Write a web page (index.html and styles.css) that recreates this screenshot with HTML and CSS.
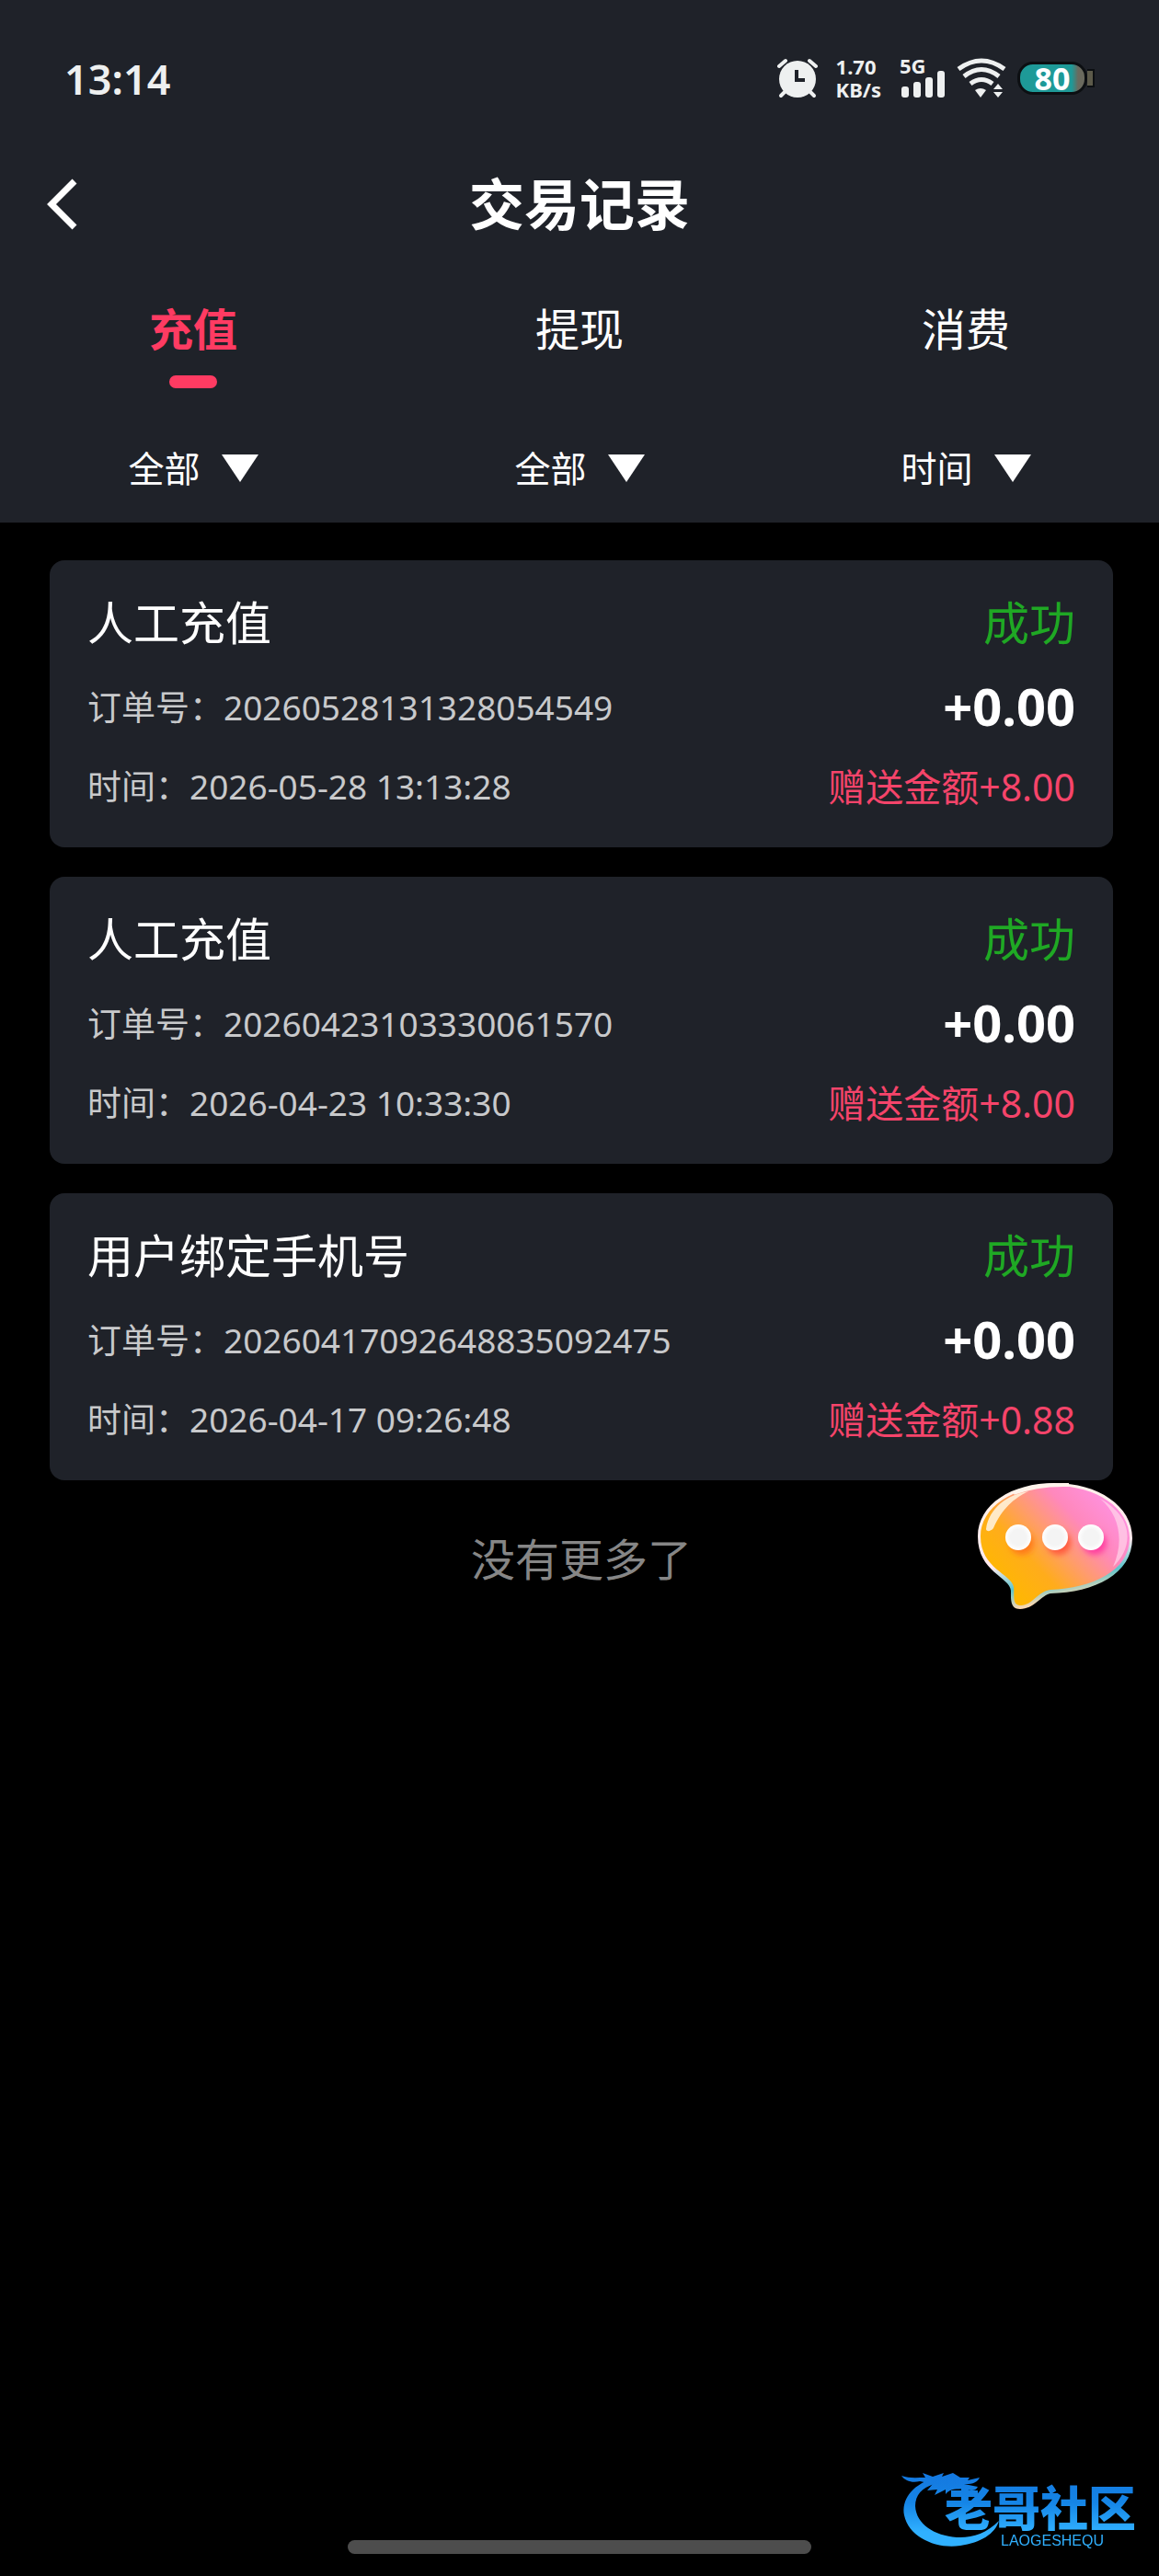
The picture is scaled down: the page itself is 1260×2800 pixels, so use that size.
FILE: index.html
```html
<!DOCTYPE html>
<html lang="zh-CN">
<head>
  <meta charset="UTF-8">
  <meta name="viewport" content="width=device-width, initial-scale=1.0">
  <title>交易记录</title>
  <link rel="stylesheet" href="styles.css">
</head>
<body>
  <header class="header">
    <div class="status-bar">
      <span class="clock">13:14</span>
      <div class="status-icons">
        <svg class="icon-alarm" width="44" height="44" viewBox="0 0 44 44">
          <g stroke="#eef0f0" stroke-linecap="round" fill="none">
            <path d="M2 9 L9 3 M42 9 L35 3" stroke-width="4"/>
            <path d="M9 36 L4 41 M35 36 L40 41" stroke-width="4"/>
          </g>
          <circle cx="22" cy="23" r="20" fill="#eef0f0"/>
          <path d="M21 13 V24 H30" fill="none" stroke="#1f2229" stroke-width="4"/>
        </svg>
        <div class="net-speed">
          <span>1.70</span>
          <span>KB/s</span>
        </div>
        <div class="signal">
          <span class="signal-label">5G</span>
          <svg width="50" height="44" viewBox="0 0 50 44" fill="#eef0f0">
            <rect x="2" y="31" width="8" height="12" rx="3"/>
            <rect x="15" y="26" width="8" height="17" rx="3"/>
            <rect x="28" y="21" width="8" height="22" rx="3"/>
            <rect x="41" y="14" width="8" height="29" rx="3"/>
          </svg>
        </div>
        <svg class="icon-wifi" width="54" height="44" viewBox="0 0 54 44">
          <g fill="none" stroke="#eef0f0" stroke-width="5">
            <path d="M2 12 Q27 -6 52 12"/>
            <path d="M8 20 Q27 5 46 20"/>
            <path d="M15 28 Q27 19 39 28"/>
          </g>
          <path d="M20 35 Q26 31 32 35 L26 43 Z" fill="#eef0f0"/>
          <path d="M40 34 L45 28 L50 34 Z M40 37 L45 43 L50 37 Z" fill="#eef0f0"/>
        </svg>
        <div class="battery">
          <span class="battery-level">80</span>
          <span class="battery-tip"></span>
        </div>
      </div>
    </div>

    <div class="navbar">
      <button class="back-btn" aria-label="返回">
        <svg width="34" height="56" viewBox="0 0 34 56">
          <path d="M31 3 L6 28 L31 53" fill="none" stroke="#fff" stroke-width="7"/>
        </svg>
      </button>
      <h1>交易记录</h1>
    </div>

    <nav class="tabs">
      <button class="active">充值</button>
      <button>提现</button>
      <button>消费</button>
    </nav>

    <div class="filters">
      <label class="filter">
        <select aria-label="类型">
          <option>全部</option>
          <option>人工</option>
        </select>
        <svg width="40" height="30" viewBox="0 0 40 30"><path d="M0 0 H40 L20 30 Z" fill="#fff"/></svg>
      </label>
      <label class="filter">
        <select aria-label="状态">
          <option>全部</option>
          <option>成功</option>
        </select>
        <svg width="40" height="30" viewBox="0 0 40 30"><path d="M0 0 H40 L20 30 Z" fill="#fff"/></svg>
      </label>
      <label class="filter">
        <select aria-label="时间">
          <option>时间</option>
          <option>今天</option>
        </select>
        <svg width="40" height="30" viewBox="0 0 40 30"><path d="M0 0 H40 L20 30 Z" fill="#fff"/></svg>
      </label>
    </div>
  </header>

  <main class="records">
    <article class="record">
      <h2>人工充值</h2>
      <span class="state">成功</span>
      <p>订单号：20260528131328054549</p>
      <strong class="amount">+0.00</strong>
      <p>时间：2026-05-28 13:13:28</p>
      <span class="bonus">赠送金额+8.00</span>
    </article>

    <article class="record">
      <h2>人工充值</h2>
      <span class="state">成功</span>
      <p>订单号：20260423103330061570</p>
      <strong class="amount">+0.00</strong>
      <p>时间：2026-04-23 10:33:30</p>
      <span class="bonus">赠送金额+8.00</span>
    </article>

    <article class="record">
      <h2>用户绑定手机号</h2>
      <span class="state">成功</span>
      <p>订单号：20260417092648835092475</p>
      <strong class="amount">+0.00</strong>
      <p>时间：2026-04-17 09:26:48</p>
      <span class="bonus">赠送金额+0.88</span>
    </article>

    <p class="no-more">没有更多了</p>
  </main>

  <button class="chat-btn" aria-label="在线客服">
    <svg width="170" height="140" viewBox="0 0 170 140">
      <defs>
        <linearGradient id="bubble" x1="0.1" y1="0.8" x2="0.9" y2="0.2">
          <stop offset="0" stop-color="#ffb800"/>
          <stop offset="0.3" stop-color="#ffac1c"/>
          <stop offset="0.52" stop-color="#ff9c6c"/>
          <stop offset="0.75" stop-color="#ff88bc"/>
          <stop offset="1" stop-color="#ff90dc"/>
        </linearGradient>
        <linearGradient id="rim" x1="0" y1="0" x2="0.25" y2="1">
          <stop offset="0" stop-color="#fff4ea"/>
          <stop offset="0.65" stop-color="#ffe9ee"/>
          <stop offset="0.85" stop-color="#5cc4cc"/>
          <stop offset="1" stop-color="#ffd9b0"/>
        </linearGradient>
        <radialGradient id="dot">
          <stop offset="0.6" stop-color="#f4f4f4"/>
          <stop offset="1" stop-color="#ffffff"/>
        </radialGradient>
        <filter id="soft" x="-20%" y="-20%" width="140%" height="140%">
          <feGaussianBlur stdDeviation="3"/>
        </filter>
      </defs>
      <path d="M84 1 C132 1 169 26 169 61 C169 100 128 120 80 121 C70 123 62 138 47 138 C36 138 37 127 37 118 C36 103 1 98 1 59 C1 24 38 1 84 1 Z" fill="url(#rim)"/>
      <path d="M84 4 C130 4 166 28 166 61 C166 97 125 115 80 117 C66 119 60 134 48 134 C38 134 41 124 40 114 C38 100 4 94 4 59 C4 27 40 4 84 4 Z" fill="url(#bubble)"/>
      <path d="M134 18 C156 36 160 66 148 92 C168 74 174 40 134 18 Z" fill="#ffd6ea" opacity="0.7"/>
      <path d="M10 51 C13 28 34 13 56 10 C40 18 28 28 18 50 C15 54 10 54 10 51 Z" fill="#fff1d8" opacity="0.9"/>
      <path d="M40 12 Q66 2 100 3" fill="none" stroke="#fff3ea" stroke-width="4"/>
      <g filter="url(#soft)">
        <circle cx="49" cy="66" r="13" fill="#ff7a1c"/>
        <circle cx="89" cy="66" r="13" fill="#ff5a3c"/>
        <circle cx="128" cy="66" r="13" fill="#ff3fa0"/>
      </g>
      <circle cx="45" cy="60" r="14" fill="url(#dot)"/>
      <circle cx="85" cy="60" r="14" fill="url(#dot)"/>
      <circle cx="124" cy="60" r="14" fill="url(#dot)"/>
    </svg>
  </button>

  <div class="brand">
    <svg width="264" height="94" viewBox="0 0 264 94">
      <defs>
        <linearGradient id="blue" gradientUnits="userSpaceOnUse" x1="0" y1="0" x2="0" y2="90">
          <stop offset="0.1" stop-color="#1478e0"/>
          <stop offset="0.45" stop-color="#1585e6"/>
          <stop offset="0.8" stop-color="#30b0ff"/>
        </linearGradient>
      </defs>
      <g fill="url(#blue)">
        <path d="M34 14 C10 22 0 38 3 54 C8 78 38 91 64 87 C86 84 102 74 106 60 C92 74 76 79 60 78 C36 76 16 64 15 44 C15 32 22 24 36 20 Z"/>
        <path d="M0 11 C8 14 16 13 26 13 L23 8 L34 12 L46 8 L44 12 L56 8 L64 13 L74 13 L72 16 L85 13 C82 20 74 20 68 20 L83 23 C80 29 73 27 68 25 C60 26 54 24 48 31 L48 26 L36 32 L39 26 L28 27 L34 20 L20 17 C12 19 4 17 0 11 Z"/>
        <text class="brand-name" x="47" y="66">老哥社区</text>
        <text class="brand-sub" x="108" y="87">LAOGESHEQU</text>
      </g>
    </svg>
  </div>
  <div class="home-bar"></div>
</body>
</html>
```

FILE: styles.css
```css
* {
  box-sizing: border-box;
}
body {
  margin: 0;
  min-height: 100vh;
  background: #000;
  color: #fff;
  font-family: "Noto Sans", "Noto Sans CJK SC", sans-serif;
}
h1, h2, p {
  margin: 0;
}
svg {
  display: block;
}
button, select {
  margin: 0;
  padding: 0;
  border: none;
  background: none;
  color: inherit;
  font-family: inherit;
  cursor: pointer;
}

/* top area */
.header {
  background: #1f2229;
  padding-bottom: 31px;
}
.status-bar {
  display: flex;
  align-items: center;
  justify-content: space-between;
  height: 170px;
  padding: 0 70px;
  color: #eef0f0;
}
.clock {
  font-size: 45px;
  font-weight: 600;
}
.status-icons {
  display: flex;
  align-items: center;
}
.net-speed {
  display: flex;
  flex-direction: column;
  margin: 0 20px;
  font-size: 22px;
  line-height: 25px;
  font-weight: 700;
}
.signal {
  position: relative;
  margin-right: 12px;
}
.signal-label {
  position: absolute;
  top: -4px;
  left: 0;
  font-size: 22px;
  line-height: 25px;
  font-weight: 700;
}
.icon-wifi {
  margin-right: 12px;
}
.battery {
  display: flex;
  align-items: center;
}
.battery-level {
  width: 76px;
  border: 3px solid #0c0f12;
  border-radius: 17px;
  background: linear-gradient(to right, #1e9a98 80%, #6a6a5e 90%);
  color: #fff;
  font-size: 34px;
  line-height: 30px;
  font-weight: 700;
  text-align: center;
}
.battery-tip {
  width: 8px;
  height: 20px;
  border: 2px solid #0c0f12;
  border-left: none;
  background: #5c5a4a;
}

.navbar {
  display: grid;
  grid-template-columns: 120px 1fr 120px;
  align-items: center;
  height: 104px;
}
.back-btn {
  justify-self: start;
  padding-left: 50px;
}
.navbar h1 {
  font-size: 60px;
  line-height: 80px;
  font-weight: 700;
  text-align: center;
}

.tabs {
  display: grid;
  grid-template-columns: repeat(3, 1fr);
  padding-top: 52px;
}
.tabs button {
  display: flex;
  flex-direction: column;
  align-items: center;
  gap: 18px;
  font-size: 48px;
  line-height: 64px;
}
.tabs button::after {
  content: "";
  width: 52px;
  height: 14px;
  border-radius: 7px;
}
.tabs .active {
  color: #ff3b62;
  font-weight: 700;
}
.tabs .active::after {
  background: #ff3b62;
}

.filters {
  display: grid;
  grid-template-columns: repeat(3, 1fr);
  padding-top: 59px;
}
.filter {
  display: flex;
  align-items: center;
  justify-content: center;
  gap: 22px;
}
.filter select {
  appearance: none;
  font-size: 39px;
  line-height: 56px;
}
.filter option {
  background: #1f2229;
}

/* list */
.records {
  display: flex;
  flex-direction: column;
  gap: 32px;
  padding: 41px 50px 0 54px;
}
.record {
  display: grid;
  grid-template-columns: 1fr auto;
  grid-template-rows: 94px 92px 80px;
  align-items: center;
  padding: 18px 41px 28px;
  border-radius: 16px;
  background: #1f2229;
}
.record h2 {
  font-size: 50px;
  font-weight: 400;
}
.record p {
  color: #c8c9cb;
  font-size: 37px;
}
.state, .amount, .bonus {
  text-align: right;
}
.state {
  color: #1fa824;
  font-size: 50px;
}
.amount {
  font-size: 56px;
  font-weight: 700;
}
.bonus {
  color: #f5446a;
  font-size: 41px;
}
.no-more {
  padding-top: 22px;
  color: #868686;
  font-size: 48px;
  line-height: 64px;
  text-align: center;
}

/* floating parts */
.chat-btn {
  position: fixed;
  top: 1611px;
  right: 28px;
}
.brand {
  position: fixed;
  right: 16px;
  bottom: 26px;
}
.brand-name {
  font-size: 52px;
  font-weight: 900;
}
.brand-sub {
  font-family: "Liberation Sans", sans-serif;
  font-size: 16px;
}
.home-bar {
  position: fixed;
  left: 30%;
  right: 30%;
  bottom: 24px;
  height: 15px;
  border-radius: 8px;
  background: #4d4d4d;
}
```
